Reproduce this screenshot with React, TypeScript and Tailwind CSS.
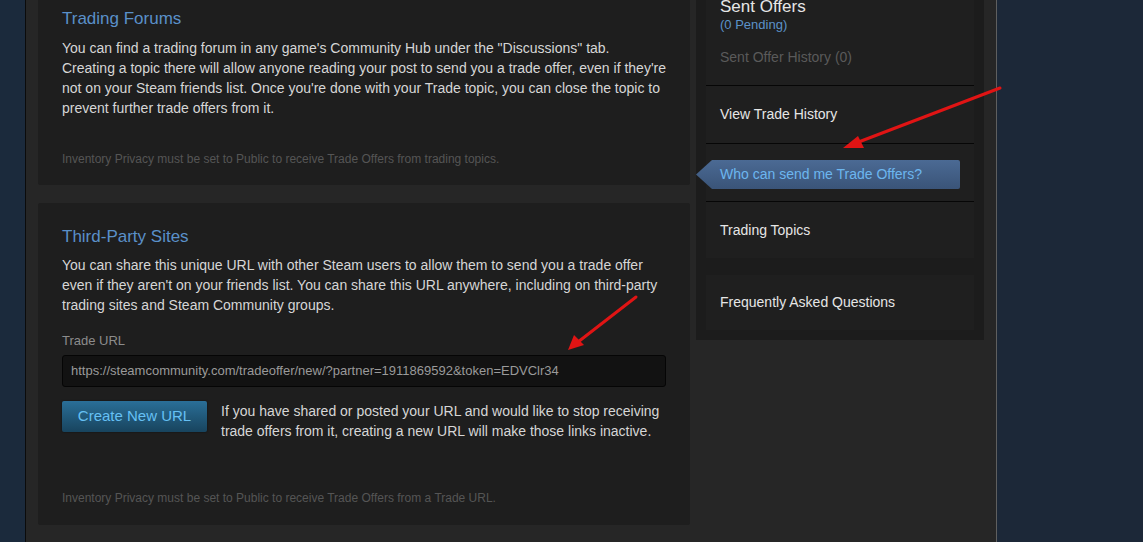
export default function App() {
  const body = "text-[14px] leading-[20px] text-[#d6d6d6]";
  const note = "text-[12px] leading-[16px] text-[#555555]";

  return (
    <div className="relative flex h-[542px] w-full overflow-hidden bg-[#1b2838] font-['Liberation_Sans',Arial,sans-serif]">
      {/* left page gutter */}
      <div className="w-[26px] shrink-0 border-r border-[#0b0b0b] bg-[#1b2a3c]" />

      {/* main content */}
      <div className="flex h-full w-[970px] shrink-0 items-start bg-[#262626] pl-[12px]">
        {/* left column */}
        <div className="flex w-[652px] shrink-0 flex-col gap-[18px]">
          <div className="rounded-b-[2px] bg-[#1e1e1e] px-[24px] pt-[8px] pb-[18px]">
            <h2 className="text-[17px] leading-[22px] text-[#5a90c9]">Trading Forums</h2>
            <p className={`mt-[8px] ${body}`}>
              <span className="block">You can find a trading forum in any game's Community Hub under the "Discussions" tab.</span>
              <span className="block">Creating a topic there will allow anyone reading your post to send you a trade offer, even if they're</span>
              <span className="block">not on your Steam friends list. Once you're done with your Trade topic, you can close the topic to</span>
              <span className="block">prevent further trade offers from it.</span>
            </p>
            <p className={`mt-[33px] ${note}`}>
              Inventory Privacy must be set to Public to receive Trade Offers from trading topics.
            </p>
          </div>

          <div className="rounded-[2px] bg-[#1e1e1e] px-[24px] pt-[23px] pb-[19px]">
            <h2 className="text-[17px] leading-[22px] text-[#5a90c9]">Third-Party Sites</h2>
            <p className={`mt-[7px] ${body}`}>
              <span className="block">You can share this unique URL with other Steam users to allow them to send you a trade offer</span>
              <span className="block">even if they aren't on your friends list. You can share this URL anywhere, including on third-party</span>
              <span className="block">trading sites and Steam Community groups.</span>
            </p>
            <div className="mt-[18px] text-[13px] leading-[16px] text-[#8c8c8c]">Trade URL</div>
            <div className="mt-[6px] flex h-[32px] items-center rounded-[3px] border border-[#050505] bg-[#121212] px-[8px] text-[13px] text-[#9a9a9a]">
              https://steamcommunity.com/tradeoffer/new/?partner=1911869592&amp;token=EDVClr34
            </div>
            <div className="mt-[14px] flex items-start gap-[14px]">
              <button className="h-[31px] w-[145px] shrink-0 rounded-[2px] bg-gradient-to-b from-[#2a6f98] to-[#18445e] text-[15px] text-[#66c0f4] shadow-[0_0_2px_rgba(0,0,0,0.6)]">
                Create New URL
              </button>
              <p className={body}>
                <span className="block">If you have shared or posted your URL and would like to stop receiving</span>
                <span className="block">trade offers from it, creating a new URL will make those links inactive.</span>
              </p>
            </div>
            <p className={`mt-[49px] ${note}`}>
              Inventory Privacy must be set to Public to receive Trade Offers from a Trade URL.
            </p>
          </div>
        </div>

        {/* right nav */}
        <div className="ml-[6px] w-[288px] shrink-0 bg-[#1c1c1c] px-[10px] pb-[10px]">
          <div className="border-b border-[#060606] bg-[#1f1f1f] px-[14px] pb-[19px]">
            <div className="-mt-[3px] text-[17px] leading-[20px] text-[#e6e6e6]">Sent Offers</div>
            <div className="text-[13px] leading-[16px] text-[#5c92c9]">(0 Pending)</div>
            <div className="mt-[15px] text-[14px] leading-[18px] text-[#5a5a5a]">Sent Offer History (0)</div>
          </div>
          <div className="flex h-[58px] items-center border-b border-[#060606] bg-[#1f1f1f] px-[14px] text-[14px] text-[#e6e6e6]">
            View Trade History
          </div>
          <div className="flex h-[58px] items-start border-b border-[#060606] bg-[#1f1f1f] pt-[16px]">
            <div className="-ml-[10px] flex h-[29px] w-[264px] items-center rounded-r-[2px] bg-gradient-to-b from-[#4b6a94] to-[#3a5478] pl-[24px] text-[14px] text-[#6cb6ef] [clip-path:polygon(16px_0,100%_0,100%_100%,16px_100%,0_50%)]">
              Who can send me Trade Offers?
            </div>
          </div>
          <div className="flex h-[56px] items-center bg-[#1f1f1f] px-[14px] text-[14px] text-[#e6e6e6]">
            Trading Topics
          </div>
          <div className="mt-[17px] flex h-[55px] items-center bg-[#1f1f1f] px-[14px] text-[14px] text-[#e6e6e6]">
            Frequently Asked Questions
          </div>
        </div>
      </div>

      {/* right page gutter */}
      <div className="flex-1 border-l border-[#5f5f5f] bg-[#1c2838]" />

      {/* annotation arrows */}
      <svg className="pointer-events-none absolute inset-0" width="1143" height="542" viewBox="0 0 1143 542">
        <g stroke="#e01414" strokeWidth="3" strokeLinecap="round">
          <line x1="1000" y1="88" x2="856" y2="143" />
          <line x1="636" y1="297" x2="578" y2="342" />
        </g>
        <g fill="#e01414">
          <polygon points="843,148 858,136 864,148" />
          <polygon points="568,350 574,335 584,345" />
        </g>
      </svg>
    </div>
  );
}
